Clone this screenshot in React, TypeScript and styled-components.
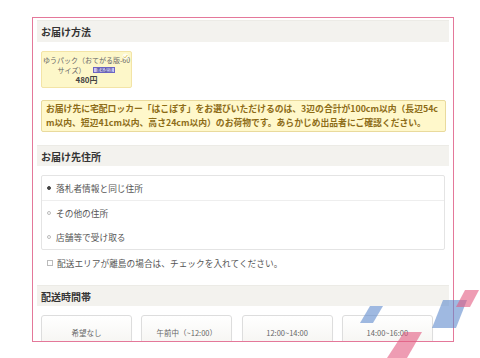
import React from "react";
import styled, { createGlobalStyle } from "styled-components";

const GlobalStyle = createGlobalStyle`
  html, body {
    margin: 0;
    padding: 0;
    background: #ffffff;
  }
  body {
    font-family: "Noto Sans CJK JP", "Noto Sans", sans-serif;
    color: #555555;
  }
`;

const Page = styled.div`
  position: relative;
  width: 480px;
  height: 358px;
  overflow: hidden;
  padding: 17px 0 0 32px;
  box-sizing: border-box;
`;

const Frame = styled.div`
  width: 422px;
  height: 325px;
  box-sizing: border-box;
  border: 1px solid #e4789a;
  padding: 2px 4px 0 4px;
  overflow: hidden;
  display: flex;
  flex-direction: column;
`;

const SectionHeader = styled.div<{ $top?: number; $height?: number }>`
  margin-top: ${({ $top }) => $top ?? 0}px;
  height: ${({ $height }) => $height ?? 21}px;
  flex-shrink: 0;
  background: #f3f2ee;
  border-top: 1px solid #ecebe6;
  box-sizing: border-box;
  display: flex;
  align-items: center;
  padding-left: 4px;
  font-size: 10px;
  font-weight: 700;
  color: #333333;
`;

const SectionBody = styled.div`
  padding: 0 3px 0 4px;
  display: flex;
  flex-direction: column;
  flex-shrink: 0;
`;

const MethodCard = styled.div`
  position: relative;
  margin-top: 9px;
  width: 91px;
  height: 37px;
  box-sizing: border-box;
  background: #fdf7c9;
  border: 1px solid #f3e4a6;
  border-radius: 2px;
  display: flex;
  flex-direction: column;
  align-items: center;
  justify-content: center;
  font-size: 7px;
  line-height: 10px;
  color: #666666;
`;

const CardLine = styled.div`
  display: flex;
  align-items: center;
  gap: 8px;
  white-space: nowrap;
`;

const Price = styled.div`
  font-size: 8px;
  font-weight: 700;
  color: #444444;
`;

const Badge = styled.span`
  display: inline-flex;
  align-items: center;
  justify-content: center;
  width: 22px;
  height: 6px;
  background: #c9c2f2;
  border: 1px solid #6c64c4;
  box-sizing: border-box;
  font-size: 4px;
  line-height: 4px;
  color: #2c2a7c;
`;

const CheckMark = styled.svg`
  position: absolute;
  top: 1px;
  right: 2px;
  width: 7px;
  height: 7px;
`;

const Notice = styled.div`
  margin-top: 12px;
  height: 32px;
  box-sizing: border-box;
  background: #fff8cb;
  border: 1px solid #e9da9d;
  border-radius: 2px;
  padding: 1px 2px 0 4px;
  font-size: 8.8px;
  line-height: 14px;
  font-weight: 700;
  color: #8d6c17;
  white-space: nowrap;
  overflow: hidden;
`;

const Options = styled.div`
  margin-top: 9px;
  width: 404px;
  border: 1px solid #e4e4e4;
  border-radius: 2px;
  box-sizing: border-box;
  display: flex;
  flex-direction: column;
`;

const OptionRow = styled.div<{ $divider?: boolean }>`
  height: ${({ $divider }) => ($divider ? 25 : 24)}px;
  box-sizing: border-box;
  border-bottom: ${({ $divider }) => ($divider ? "1px solid #eeeeee" : "none")};
  display: flex;
  align-items: center;
  padding-left: 5px;
  gap: 5px;
  font-size: 8.7px;
  color: #555555;
`;

const Radio = styled.span<{ $checked?: boolean }>`
  width: 4px;
  height: 4px;
  border-radius: 50%;
  box-sizing: border-box;
  flex-shrink: 0;
  background: ${({ $checked }) => ($checked ? "#444444" : "#ffffff")};
  border: 1px solid ${({ $checked }) => ($checked ? "#444444" : "#bbbbbb")};
`;

const CheckRow = styled.div`
  margin-top: 7px;
  height: 12px;
  display: flex;
  align-items: center;
  padding-left: 6px;
  gap: 4px;
  font-size: 8.7px;
  color: #555555;
`;

const Box = styled.span`
  width: 4px;
  height: 4px;
  border: 1px solid #bbbbbb;
  flex-shrink: 0;
`;

const TimeList = styled.div`
  margin-top: 9px;
  display: flex;
  gap: 9.3px;
`;

const TimeButton = styled.div`
  width: 91px;
  height: 36px;
  flex-shrink: 0;
  box-sizing: border-box;
  border: 1px solid #dddddd;
  border-radius: 3px;
  background: linear-gradient(#ffffff, #f4f3ef);
  box-shadow: 0 1px 1px rgba(0, 0, 0, 0.05);
  display: flex;
  align-items: flex-start;
  justify-content: center;
  padding-top: 12px;
  font-size: 7.5px;
  line-height: 10px;
  color: #666666;
`;

const Decoration = styled.svg`
  position: absolute;
  left: 0;
  top: 0;
  width: 480px;
  height: 358px;
  pointer-events: none;
`;

const addressOptions = ["落札者情報と同じ住所", "その他の住所", "店舗等で受け取る"];
const timeSlots = ["希望なし", "午前中（~12:00）", "12:00~14:00", "14:00~16:00"];

const App = () => {
  return (
    <>
      <GlobalStyle />
      <Page>
        <Frame>
          <SectionHeader $height={22}>お届け方法</SectionHeader>
          <SectionBody>
            <MethodCard>
              <CheckMark viewBox="0 0 7 7">
                <circle cx="3.5" cy="3.5" r="3" fill="#ffffff" opacity="0.7" />
                <path d="M1.8 3.6 L3 4.8 L5.4 2" fill="none" stroke="#e6c85a" strokeWidth="1" />
              </CheckMark>
              <CardLine>ゆうパック（おてがる版-60</CardLine>
              <CardLine>
                サイズ）<Badge>匿名配送</Badge>
              </CardLine>
              <Price>480円</Price>
            </MethodCard>
            <Notice>
              お届け先に宅配ロッカー「はこぽす」をお選びいただけるのは、3辺の合計が100cm以内（長辺54c
              <br />
              m以内、短辺41cm以内、高さ24cm以内）のお荷物です。あらかじめ出品者にご確認ください。
            </Notice>
          </SectionBody>

          <SectionHeader $top={13}>お届け先住所</SectionHeader>
          <SectionBody>
            <Options>
              {addressOptions.map((label, i) => (
                <OptionRow key={label} $divider={i === 0}>
                  <Radio $checked={i === 0} />
                  {label}
                </OptionRow>
              ))}
            </Options>
            <CheckRow>
              <Box />
              配送エリアが離島の場合は、チェックを入れてください。
            </CheckRow>
          </SectionBody>

          <SectionHeader $top={16}>配送時間帯</SectionHeader>
          <SectionBody>
            <TimeList>
              {timeSlots.map((slot) => (
                <TimeButton key={slot}>{slot}</TimeButton>
              ))}
            </TimeList>
          </SectionBody>
        </Frame>

        <Decoration viewBox="0 0 480 358">
          <polygon points="370,306 383,306 373,323 360,323" fill="#5f8bcd" opacity="0.6" />
          <polygon points="443,300 467,300 456,328 432,328" fill="#5f8bcd" opacity="0.6" />
          <polygon points="465,290 479,290 470,307 456,307" fill="#e25a80" opacity="0.6" />
          <polygon points="404,332 422,332 407,358 387,358" fill="#e25a80" opacity="0.6" />
        </Decoration>
      </Page>
    </>
  );
};

export default App;
